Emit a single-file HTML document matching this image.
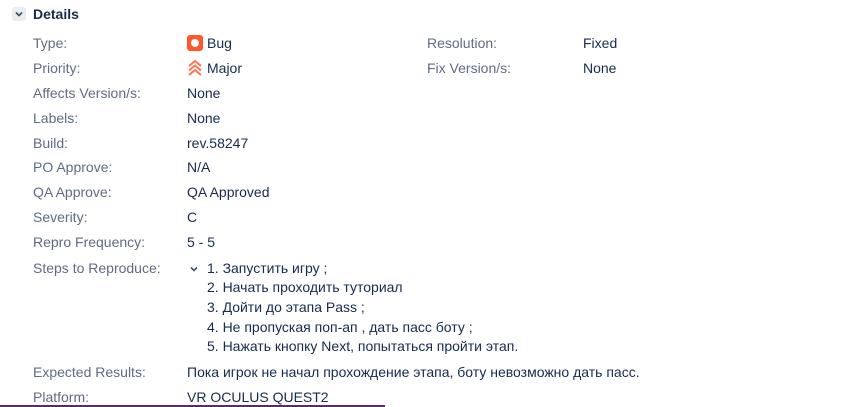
<!DOCTYPE html>
<html><head><meta charset="utf-8"><style>
html,body{margin:0;padding:0;background:#fff;width:850px;height:407px;overflow:hidden;position:relative;
font-family:"Segoe UI","Liberation Sans","Noto Sans CJK SC",sans-serif;font-size:14px;color:#172b4d}
.a{position:absolute;white-space:nowrap;line-height:18px}
.l{color:#5e6c84}
</style></head><body>
<div style="position:absolute;left:12px;top:7px;width:14px;height:14px;background:#ebecf0;border-radius:3px"></div>
<svg style="position:absolute;left:14px;top:9px" width="10" height="10" viewBox="0 0 10 10"><path d="M2 3.5 L5 6.5 L8 3.5" stroke="#42526e" stroke-width="1.8" fill="none"/></svg>
<div class="a" style="left:33px;top:5px;font-weight:bold;font-size:14px">Details</div>

<div class="a l" style="left:33px;top:34px">Type:</div>
<div style="position:absolute;left:187px;top:35px;width:16px;height:16px;background:#ff5630;border-radius:3px"></div>
<div style="position:absolute;left:191px;top:39px;width:8px;height:8px;background:#fff;border-radius:50%"></div>
<div class="a" style="left:207px;top:34px">Bug</div>
<div class="a l" style="left:427px;top:34px">Resolution:</div>
<div class="a" style="left:583px;top:34px">Fixed</div>

<div class="a l" style="left:33px;top:59px">Priority:</div>
<svg style="position:absolute;left:187px;top:59px" width="16" height="18" viewBox="0 0 16 18"><path d="M2 7 L8 2 L14 7 M2 11.5 L8 6.5 L14 11.5 M2 16 L8 11 L14 16" stroke="#ff7452" stroke-width="2" fill="none"/></svg>
<div class="a" style="left:207px;top:59px">Major</div>
<div class="a l" style="left:427px;top:59px">Fix Version/s:</div>
<div class="a" style="left:583px;top:59px">None</div>

<div class="a l" style="left:33px;top:84px">Affects Version/s:</div><div class="a" style="left:187px;top:84px">None</div>
<div class="a l" style="left:33px;top:109px">Labels:</div><div class="a" style="left:187px;top:109px">None</div>
<div class="a l" style="left:33px;top:134px">Build:</div><div class="a" style="left:187px;top:134px">rev.58247</div>
<div class="a l" style="left:33px;top:158px">PO Approve:</div><div class="a" style="left:187px;top:158px">N/A</div>
<div class="a l" style="left:33px;top:183px">QA Approve:</div><div class="a" style="left:187px;top:183px">QA Approved</div>
<div class="a l" style="left:33px;top:208px">Severity:</div><div class="a" style="left:187px;top:208px">C</div>
<div class="a l" style="left:33px;top:233px">Repro Frequency:</div><div class="a" style="left:187px;top:233px">5 - 5</div>
<div class="a l" style="left:33px;top:259px">Steps to Reproduce:</div>
<svg style="position:absolute;left:189px;top:264px" width="10" height="10" viewBox="0 0 10 10"><path d="M2 3.5 L5 6.5 L8 3.5" stroke="#42526e" stroke-width="1.6" fill="none"/></svg>
<div class="a" style="left:207px;top:259px">1. Запустить игру ;</div>
<div class="a" style="left:207px;top:278px">2. Начать проходить туториал</div>
<div class="a" style="left:207px;top:298px">3. Дойти до этапа Pass ;</div>
<div class="a" style="left:207px;top:318px">4. Не пропуская поп-ап , дать пасс боту ;</div>
<div class="a" style="left:207px;top:337px">5. Нажать кнопку Next, попытаться пройти этап.</div>
<div class="a l" style="left:33px;top:363px">Expected Results:</div><div class="a" style="left:187px;top:363px">Пока игрок не начал прохождение этапа, боту невозможно дать пасс.</div>
<div class="a l" style="left:33px;top:388px">Platform:</div><div class="a" style="left:187px;top:388px">VR OCULUS QUEST2</div>
<div style="position:absolute;left:0;top:405px;width:385px;height:2px;background:#5a2a6a"></div>
</body></html>
